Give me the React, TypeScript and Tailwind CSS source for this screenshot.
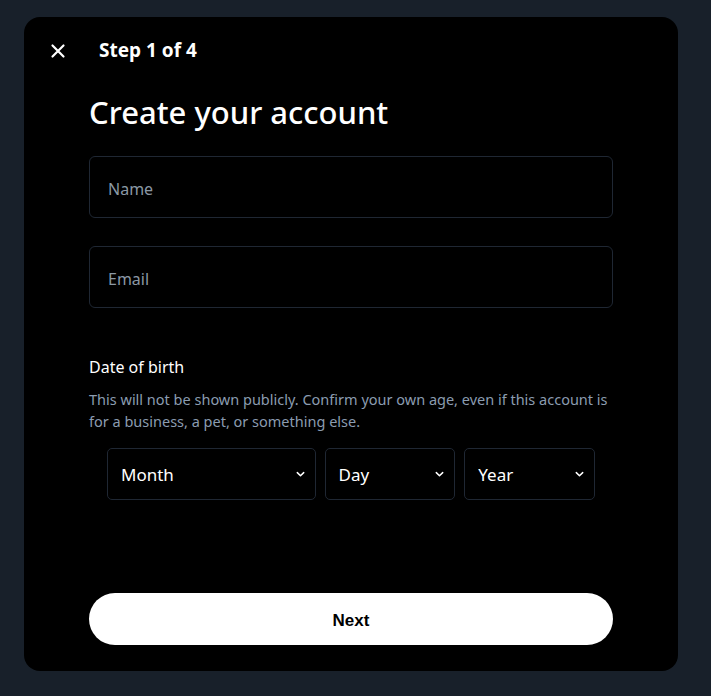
import React from "react";

function Chevron() {
  return (
    <svg
      className="pointer-events-none absolute right-[10px] top-1/2 -translate-y-1/2"
      width="11"
      height="11"
      viewBox="0 0 12 12"
      fill="none"
    >
      <path d="M2.5 4.5L6 8l3.5-3.5" stroke="white" strokeWidth="1.6" strokeLinecap="round" strokeLinejoin="round" />
    </svg>
  );
}

function DateSelect({ label, width }: { label: string; width: string }) {
  return (
    <div className={`relative ${width}`}>
      <select className="h-[52px] w-full appearance-none rounded-[5px] border border-[#1f2733] bg-black pl-[13px] pt-[2px] text-[17px] text-white outline-none">
        <option>{label}</option>
      </select>
      <Chevron />
    </div>
  );
}

export default function App() {
  return (
    <div className="min-h-screen bg-[#18202a] pt-[17px] pl-[24px] font-['Noto_Sans','Open_Sans',sans-serif]">
      <div className="flex h-[654px] w-[654px] flex-col rounded-[16px] bg-black">
        {/* header */}
        <div className="flex h-[66px] items-center pt-[1px]">
          <button className="ml-[26px] flex h-[16px] w-[16px] items-center justify-center text-white">
            <svg width="16" height="16" viewBox="0 0 16 16" fill="none">
              <path d="M2.5 2.5l11 11M13.5 2.5l-11 11" stroke="white" strokeWidth="2.2" strokeLinecap="round" />
            </svg>
          </button>
          <span className="ml-[33px] text-[19px] font-bold text-white">Step 1 of 4</span>
        </div>

        <div className="flex flex-1 flex-col px-[65px]">
          <h1 className="mt-[7px] text-[31px] leading-[44px] font-medium text-white">Create your account</h1>

          <input
            placeholder="Name"
            className="mt-[22px] h-[62px] w-full rounded-[6px] border border-[#1f2733] bg-black px-[18px] pt-[3px] text-[16px] text-white outline-none placeholder:text-[#8b98a5]"
          />
          <input
            placeholder="Email"
            className="mt-[28px] h-[62px] w-full rounded-[6px] border border-[#1f2733] bg-black px-[18px] pt-[3px] text-[16px] text-white outline-none placeholder:text-[#8b98a5]"
          />

          <div className="mt-[47px] text-[16px] leading-[24px] text-white">Date of birth</div>
          <p className="mt-[9px] text-[14.5px] leading-[22px] text-[#8b9cb0]">
            This will not be shown publicly. Confirm your own age, even if this account is for a business, a pet, or
            something else.
          </p>

          <div className="mt-[16px] flex gap-[9px] px-[18px]">
            <DateSelect label="Month" width="w-[209px]" />
            <DateSelect label="Day" width="w-[131px]" />
            <DateSelect label="Year" width="w-[131px]" />
          </div>

          <button className="mt-auto mb-[26px] h-[52px] w-full rounded-full bg-white pt-[3px] font-['Liberation_Sans',Arial,sans-serif] text-[17px] font-bold text-black">
            Next
          </button>
        </div>
      </div>
    </div>
  );
}
